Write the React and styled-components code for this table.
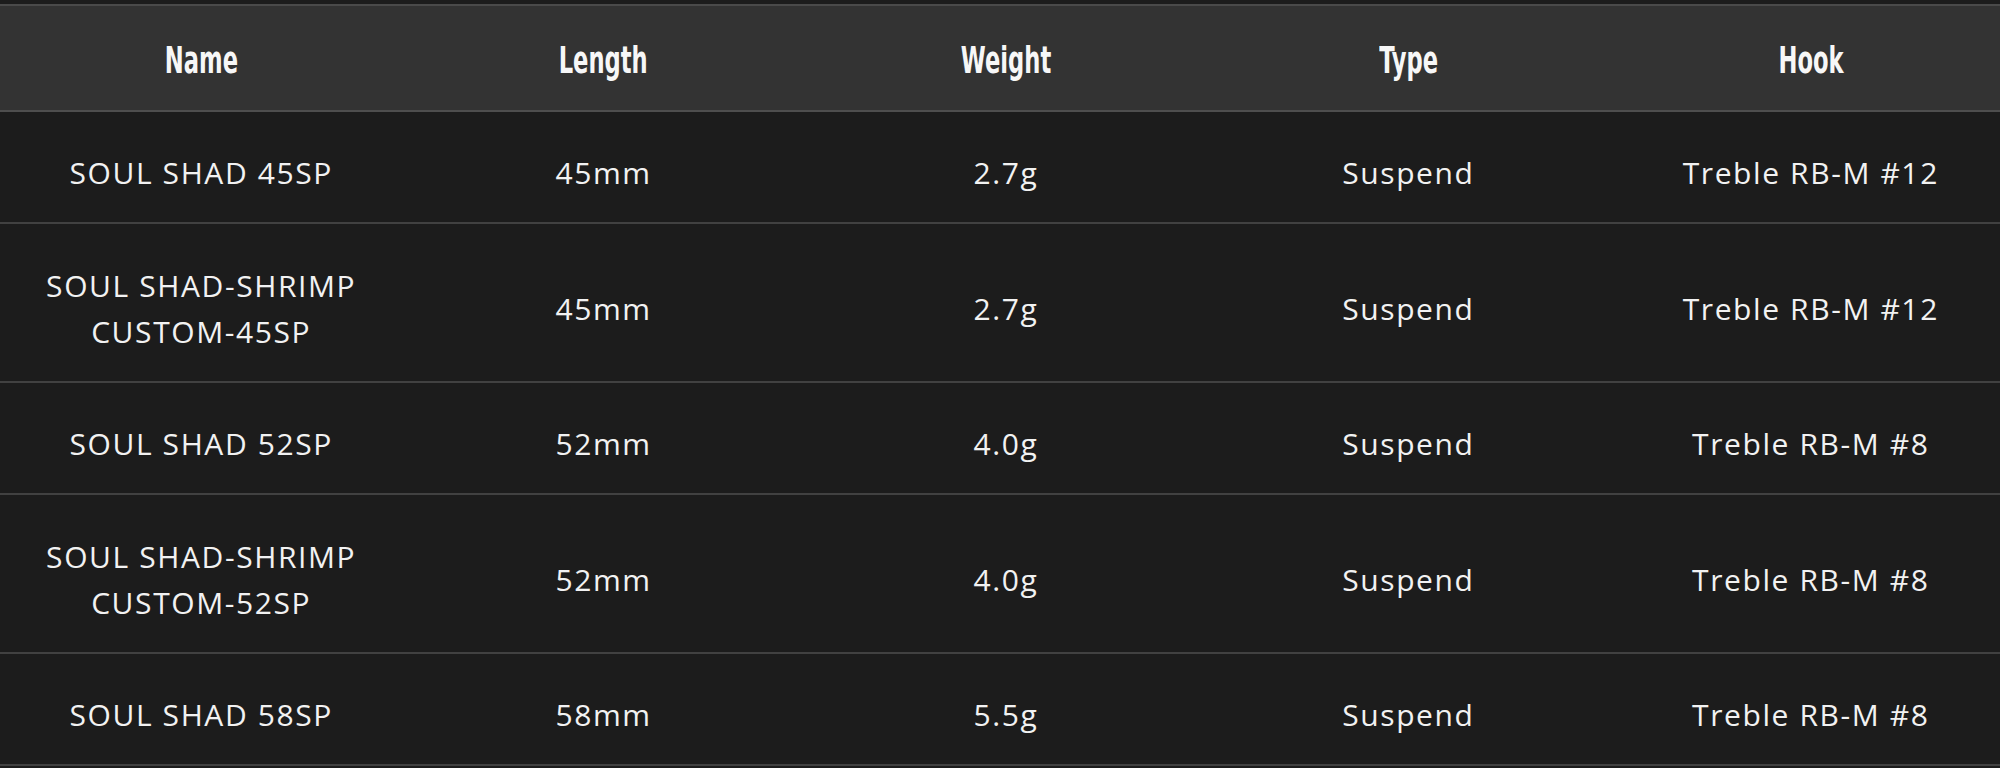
import React from "react";
import styled, { createGlobalStyle } from "styled-components";

const Global = createGlobalStyle`
  html, body { margin: 0; padding: 0; background: #1c1c1c; overflow-x: hidden; }
`;

const Page = styled.div`
  padding-top: 4px;
  background: #1c1c1c;
  overflow: hidden;
`;

const Table = styled.table`
  width: 2012px;
  border-collapse: collapse;
  table-layout: fixed;
  border-top: 2px solid #4a4a4a;
`;

const HeadRow = styled.tr`
  background: #333333;
  height: 106px;
  border-bottom: 2px solid #4e4e4e;
`;

const Th = styled.th`
  font-family: "DejaVu Sans Condensed", "DejaVu Sans", sans-serif;
  font-weight: bold;
  font-size: 34px;
  color: #f7f7f7;
  text-align: center;
  vertical-align: middle;
  padding: 0;
`;

const Narrow = styled.span`
  display: inline-block;
  transform: scale(0.74, 1.1);
  transform-origin: center;
  position: relative;
  top: 2px;
`;

const Row = styled.tr`
  height: ${(p) => (p.$tall ? 159 : 112)}px;
  border-bottom: 2px solid #414141;
  background: #1c1c1c;
`;

const Td = styled.td`
  font-family: "Open Sans", "Noto Sans", sans-serif;
  font-size: 30px;
  letter-spacing: 1.6px;
  line-height: 46px;
  color: #f2f2f2;
  text-align: center;
  vertical-align: middle;
  padding: 12px 0 0;
`;

const cols = ["Name", "Length", "Weight", "Type", "Hook"];

const rows = [
  { name: ["SOUL SHAD 45SP"], len: "45mm", w: "2.7g", t: "Suspend", h: "Treble RB-M #12" },
  { name: ["SOUL SHAD-SHRIMP", "CUSTOM-45SP"], len: "45mm", w: "2.7g", t: "Suspend", h: "Treble RB-M #12" },
  { name: ["SOUL SHAD 52SP"], len: "52mm", w: "4.0g", t: "Suspend", h: "Treble RB-M #8" },
  { name: ["SOUL SHAD-SHRIMP", "CUSTOM-52SP"], len: "52mm", w: "4.0g", t: "Suspend", h: "Treble RB-M #8" },
  { name: ["SOUL SHAD 58SP"], len: "58mm", w: "5.5g", t: "Suspend", h: "Treble RB-M #8" },
];

export default function App() {
  return (
    <Page>
      <Global />
      <Table>
        <thead>
          <HeadRow>
            {cols.map((c) => (
              <Th key={c}>
                <Narrow>{c}</Narrow>
              </Th>
            ))}
          </HeadRow>
        </thead>
        <tbody>
          {rows.map((r, i) => (
            <Row key={i} $tall={r.name.length > 1}>
              <Td>
                {r.name.map((n, j) => (
                  <React.Fragment key={j}>
                    {j > 0 && <br />}
                    {n}
                  </React.Fragment>
                ))}
              </Td>
              <Td>{r.len}</Td>
              <Td>{r.w}</Td>
              <Td>{r.t}</Td>
              <Td>{r.h}</Td>
            </Row>
          ))}
        </tbody>
      </Table>
    </Page>
  );
}
